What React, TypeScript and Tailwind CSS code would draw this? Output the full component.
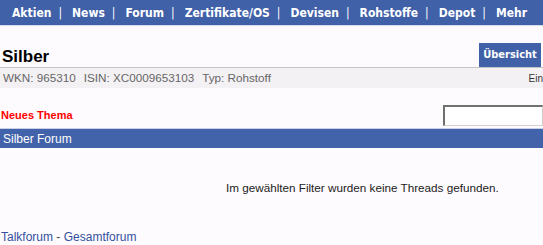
const NAV = ["Aktien", "News", "Forum", "Zertifikate/OS", "Devisen", "Rohstoffe", "Depot", "Mehr"];

export default function App() {
  return (
    <div className="h-[245px] w-full overflow-hidden bg-[#fefbfe] font-['Liberation_Sans',Arial,sans-serif] text-black">
      <nav className="flex h-[26px] items-center border-b border-[#d8dcea] bg-[#4060a8] pl-[12px] font-['DejaVu_Sans_Condensed','DejaVu_Sans',sans-serif] text-[12px] font-bold text-white">
        {NAV.map((item, i) => (
          <div key={item} className="flex items-center">
            {i > 0 && <span className="ml-[7px] mr-[10px] font-normal">|</span>}
            <span>{item}</span>
          </div>
        ))}
      </nav>

      <div className="flex h-[42px] items-end justify-between border-b border-[#c4c4c4] pl-[2px] pr-[2px]">
        <h1 className="pb-[2px] text-[17px] font-bold leading-none">Silber</h1>
        <div className="flex h-[24px] w-[62px] items-center justify-center bg-[#4060a8] font-['DejaVu_Sans_Condensed',sans-serif] text-[11px] font-bold text-white">
          Übersicht
        </div>
      </div>

      <div className="flex h-[20px] items-center justify-between bg-[#f4f1f4] pl-[3px] text-[11.7px] text-[#666]">
        <div className="flex whitespace-nowrap">
          <span>WKN: 965310</span>
          <span className="ml-[8px]">ISIN: XC0009653103</span>
          <span className="ml-[8px]">Typ: Rohstoff</span>
        </div>
        <span className="whitespace-nowrap text-[10px] text-[#333]">Ein</span>
      </div>

      <div className="mt-[17px] flex h-[21px] items-center justify-between">
        <span className="pl-[1px] text-[11px] font-bold text-[#ff0000]">Neues Thema</span>
        <input
          className="h-[21px] w-[100px] shrink-0 border-t-2 border-l-2 border-r border-b border-t-[#707070] border-l-[#707070] border-r-[#d4d0c8] border-b-[#d4d0c8] bg-white"
          readOnly
        />
      </div>

      <div className="mt-[2px] flex h-[20px] items-center border-t border-[#c8cfe6] bg-[#4262aa] pl-[3px] text-[12px] text-white">
        Silber Forum
      </div>

      <p className="mt-[31px] pl-[226px] text-[11.7px] text-[#222]">
        Im gewählten Filter wurden keine Threads gefunden.
      </p>

      <div className="mt-[31px] pl-[1px] text-[12px] text-[#3350a0]">
        <a>Talkforum</a> <span className="text-[#444]">-</span> <a>Gesamtforum</a>
      </div>
    </div>
  );
}
